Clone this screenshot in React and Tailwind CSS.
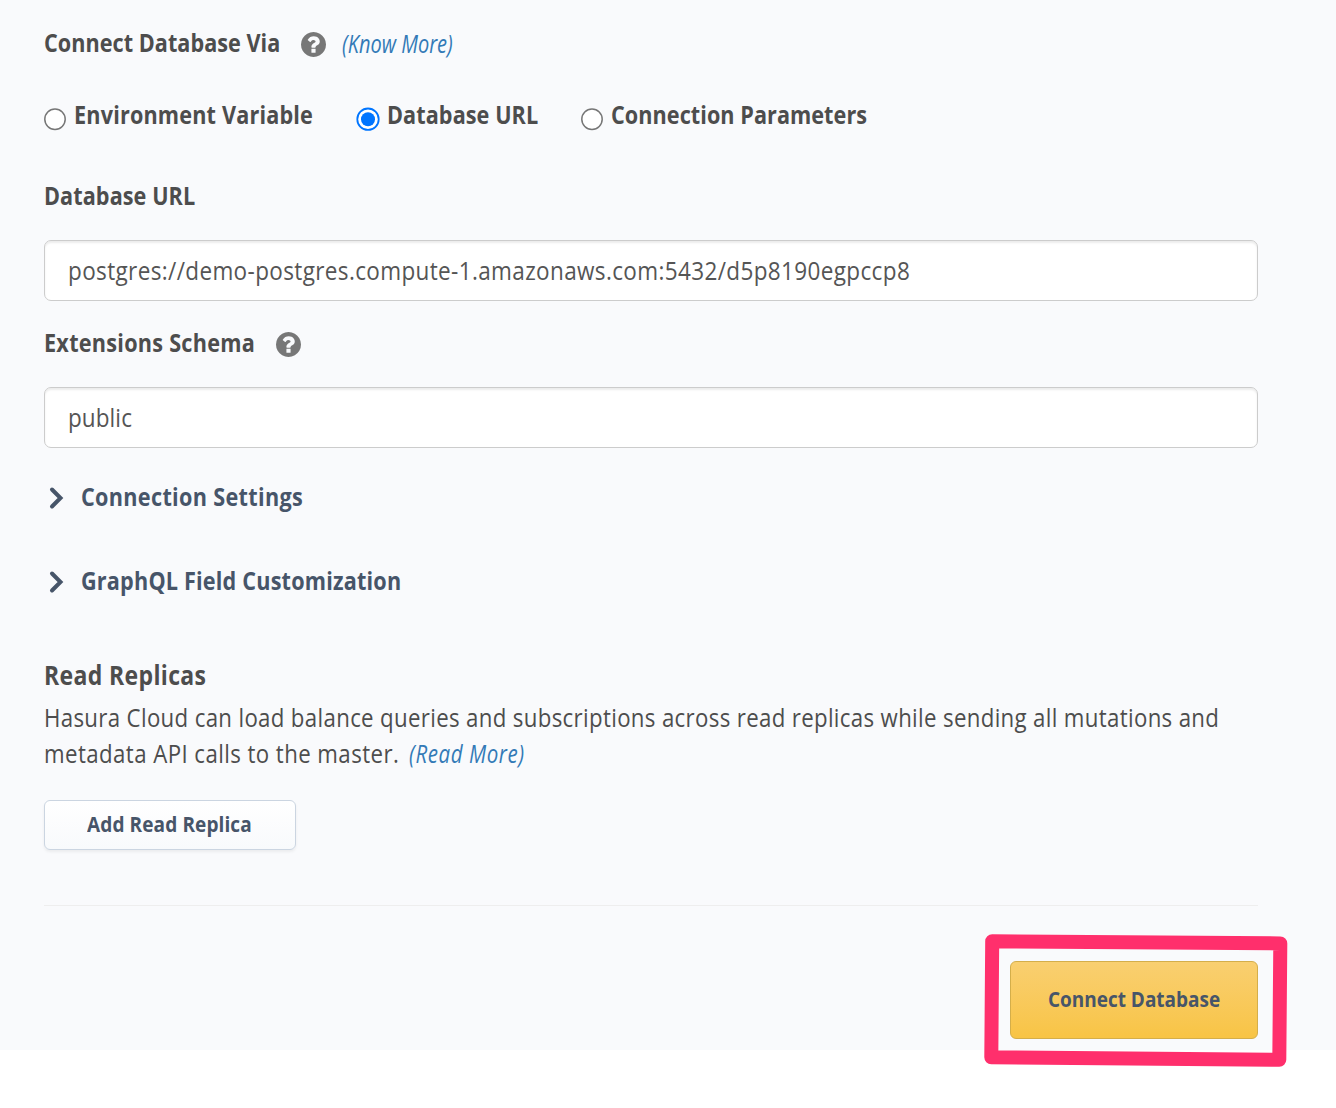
function Condensed({ children, width, className = "" }) {
  return (
    <span className={"block shrink-0 whitespace-nowrap " + width}>
      <span className={"inline-block origin-left " + className}>{children}</span>
    </span>
  );
}

function Heading({ children, width, className = "" }) {
  return (
    <h3 className="text-[25px] leading-9 font-bold">
      <Condensed width={width} className={"scale-x-[0.865] " + className}>{children}</Condensed>
    </h3>
  );
}

function HelpIcon() {
  return (
    <svg className="mt-[5px] ml-[21px] size-[25px] shrink-0 text-[#777]" viewBox="128 128 1536 1536" fill="currentColor">
      <path d="M1024 1376v-192q0-14-9-23t-23-9h-192q-14 0-23 9t-9 23v192q0 14 9 23t23 9h192q14 0 23-9t9-23zm256-672q0-88-55.5-163t-138.5-116-170-41q-243 0-371 213-15 24 8 42l132 100q7 6 19 6 16 0 25-12 53-68 86-92 34-24 86-24 48 0 85.500 26t37.500 59q0 38-20 61t-68 45q-63 28-115.500 86.500t-52.500 125.500v36q0 14 9 23t23 9h192q14 0 23-9t9-23q0-19 21.500-49.500t54.500-49.500q32-18 49-28.500t46-35 44.500-48 28-60.500 12.500-81zm384 192q0 209-103 385.500t-279.500 279.500-385.500 103-385.500-103-279.500-279.500-103-385.500 103-385.500 279.500-279.500 385.500-103 385.500 103 279.500 279.500 103 385.500z" />
    </svg>
  );
}

function Radio({ checked, label, width, className = "" }) {
  return (
    <label className="flex h-9 items-start">
      <svg className="-ml-px mt-[11px] size-6 shrink-0" viewBox="0 0 24 24">
        {checked ? (
          <>
            <circle cx="12" cy="12.2" r="10.7" fill="#fff" stroke="#0075ff" strokeWidth="1.8" />
            <circle cx="12" cy="12.2" r="7" fill="#0075ff" />
          </>
        ) : (
          <circle cx="12" cy="12.2" r="10.2" fill="#fff" stroke="#767676" strokeWidth="1.5" />
        )}
      </svg>
      <div className="ml-[7px]">
        <Heading width={width} className={className}>{label}</Heading>
      </div>
    </label>
  );
}

function Field({ value, width, className = "" }) {
  return (
    <div className="flex h-[61px] items-center rounded-[7px] border border-[#ccc] bg-white px-[23px] text-[25px] text-[#555] shadow-[inset_0_2px_2px_rgba(0,0,0,0.075)]">
      <Condensed width={width} className={"scale-x-[0.9] " + className}>{value}</Condensed>
    </div>
  );
}

function Collapsible({ label, width, className, textClassName = "" }) {
  return (
    <div className={"flex h-9 items-center text-[#475569] " + className}>
      <svg className="mt-[3px] ml-[5px] h-6 w-4" viewBox="0 0 16 24" fill="none" stroke="currentColor" strokeWidth="4" strokeLinecap="round" strokeLinejoin="miter">
        <path d="M3 3.5 11.5 12 3 20.5" />
      </svg>
      <div className="ml-4">
        <Heading width={width} className={textClassName}>{label}</Heading>
      </div>
    </div>
  );
}

export default function App() {
  return (
    <div className="h-[1108px] w-[1336px] overflow-hidden bg-white font-['Open_Sans',sans-serif] text-[#4d4d4d]">
      <main className="h-[1050px] bg-[#f9fafc] pt-6 pr-[78px] pl-11">
        <div className="flex h-9 items-center">
          <Heading width="w-[236px]" className="tracking-[0.04px]">Connect Database Via</Heading>
          <HelpIcon />
          <a className="mt-px ml-4 text-[25px] leading-9 text-[#337ab7] italic">
            <Condensed width="w-[110px]" className="scale-x-[0.8]">(Know More)</Condensed>
          </a>
        </div>
        <div className="mt-9 flex gap-[43px]">
          <Radio label="Environment Variable" width="w-[240px]" className="tracking-[0.2px]" />
          <Radio label="Database URL" width="w-[151px]" className="tracking-[0.1px]" checked />
          <Radio label="Connection Parameters" width="w-[257px]" className="tracking-[0.06px]" />
        </div>
        <div className="mt-[45px] mb-[27px]">
          <Heading width="w-[151px]" className="tracking-[0.1px]">Database URL</Heading>
        </div>
        <Field value="postgres://demo-postgres.compute-1.amazonaws.com:5432/d5p8190egpccp8" width="w-[842px]" className="tracking-[0.41px]" />
        <div className="mt-[23px] mb-[27px] flex h-9 items-center">
          <Heading width="w-[211px]" className="tracking-[0.3px]">Extensions Schema</Heading>
          <HelpIcon />
        </div>
        <Field value="public" width="w-16" className="tracking-[0.1px]" />
        <Collapsible className="mt-[30px]" label="Connection Settings" width="w-[222px]" textClassName="tracking-[0.37px]" />
        <Collapsible className="mt-12" label="GraphQL Field Customization" width="w-80" textClassName="tracking-[0.22px]" />
        <h2 className="mt-[59px] text-[26px] leading-9 font-bold">
          <Condensed width="w-[162px]" className="scale-x-[0.885] tracking-[0.4px]">Read Replicas</Condensed>
        </h2>
        <div className="mt-1.5 text-[25px] leading-9">
          <Condensed width="w-[1175px]" className="scale-x-[0.89] tracking-[0.375px]">
            Hasura Cloud can load balance queries and subscriptions across read replicas while sending all mutations and
          </Condensed>
          <div className="flex">
            <Condensed width="w-[365px]" className="scale-x-[0.89] tracking-[0.47px]">metadata API calls to the master.</Condensed>
            <a className="text-[#337ab7] italic">
              <Condensed width="w-[116px]" className="scale-x-[0.82] tracking-[0.7px]">(Read More)</Condensed>
            </a>
          </div>
        </div>
        <button className="mt-[29px] flex h-[50px] w-[252px] items-center justify-center rounded-md border border-[#cbd5e1] bg-linear-to-b from-white to-[#f8fafc] pb-1 text-[22px] font-bold text-[#475569] shadow-[0_2px_3px_rgba(0,0,0,0.06)]">
          <Condensed width="w-[166px]" className="scale-x-[0.865] tracking-[0.12px]">Add Read Replica</Condensed>
        </button>
        <hr className="mt-[55px] border-t border-[#eee]" />
        <div className="relative mt-[55px] ml-auto h-[78px] w-[248px]">
          <button className="flex size-full items-center justify-center rounded-md border border-[#d4ae4a] bg-linear-to-b from-[#f9cf70] to-[#f8c444] pb-1 text-[22px] font-bold text-[#475569]">
            <Condensed width="w-[173px]" className="scale-x-[0.862]">Connect Database</Condensed>
          </button>
          <svg className="pointer-events-none absolute -top-[31px] -left-[30px] h-[140px] w-[310px]" viewBox="0 0 310 140" fill="none">
            <path d="M12.2 11.2 300.3 13.4 299.3 129.8 11.3 127.3Z" stroke="#ff2f6c" strokeWidth="14" strokeLinejoin="round" />
          </svg>
        </div>
      </main>
    </div>
  );
}
